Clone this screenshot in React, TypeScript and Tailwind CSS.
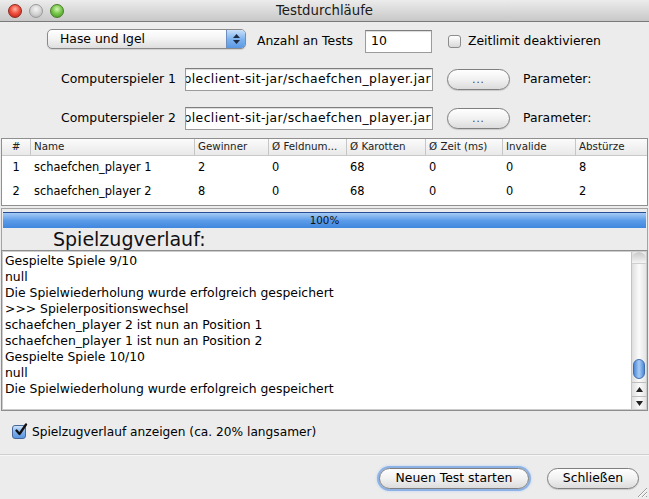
import React from "react";

function Light({ kind }: { kind: "red" | "gray" | "green" }) {
  const cls =
    kind === "red"
      ? "bg-[radial-gradient(circle_at_50%_35%,#ffb3a6_0%,#f0513f_45%,#b8160e_100%)] border-[#8e2a20]"
      : kind === "green"
      ? "bg-[radial-gradient(circle_at_50%_35%,#d6f5b8_0%,#79c94c_45%,#3b8f1d_100%)] border-[#4d7a2c]"
      : "bg-[radial-gradient(circle_at_50%_35%,#f4f4f4_0%,#d4d4d4_50%,#aaaaaa_100%)] border-[#9a9a9a]";
  return <div className={`w-[14px] h-[14px] rounded-full border ${cls}`} />;
}

function PathInput() {
  return (
    <div className="ml-[9px] w-[248px] h-[23px] bg-white border border-[#9b9b9b] border-t-[#7d7d7d] shadow-[inset_0_1px_1px_rgba(0,0,0,0.15)] overflow-hidden flex justify-end items-center pr-[1px] whitespace-nowrap">
      <span className="tracking-[0.4px]">simpleclient-sit-jar/schaefchen_player.jar</span>
    </div>
  );
}

function PillButton({ children, w, focus }: { children: React.ReactNode; w: string; focus?: boolean }) {
  return (
    <div
      className={`${w} h-[21px] rounded-full border border-[#7f7f7f] bg-gradient-to-b from-[#ffffff] via-[#f1f1f1] to-[#dcdcdc] flex items-center justify-center ${
        focus ? "shadow-[0_0_0_2px_#8db3e6,0_0_3px_2px_#b9d2f2]" : "shadow-[0_1px_1px_rgba(0,0,0,0.15)]"
      }`}
    >
      {children}
    </div>
  );
}

function Row({ label }: { label: string }) {
  return (
    <div className="flex items-center h-[23px]">
      <div className="w-[176px] text-right">{label}</div>
      <PathInput />
      <div className="ml-[14px]">
        <PillButton w="w-[63px]">
          <span className="text-[10px] tracking-[1px] text-[#333]">...</span>
        </PillButton>
      </div>
      <div className="ml-[13px]">Parameter:</div>
    </div>
  );
}

const header = ["#", "Name", "Gewinner", "Ø Feldnum...", "Ø Karotten", "Ø Zeit (ms)", "Invalide", "Abstürze"];
const rows = [
  ["1", "schaefchen_player 1", "2", "0", "68", "0", "0", "8"],
  ["2", "schaefchen_player 2", "8", "0", "68", "0", "0", "2"],
];

const logLines = [
  "Gespielte Spiele 9/10",
  "null",
  "Die Spielwiederholung wurde erfolgreich gespeichert",
  ">>> Spielerpositionswechsel",
  "schaefchen_player 2 ist nun an Position 1",
  "schaefchen_player 1 ist nun an Position 2",
  "Gespielte Spiele 10/10",
  "null",
  "Die Spielwiederholung wurde erfolgreich gespeichert",
];

export default function App() {
  return (
    <div className="relative w-[649px] h-[499px] overflow-hidden bg-[#ececec] font-['DejaVu_Sans',sans-serif] text-[12.4px] text-black flex flex-col">
      {/* Title bar */}
      <div className="relative h-[22px] shrink-0 border-b border-[#7a7a7a] bg-gradient-to-b from-[#ececec] to-[#c8c8c8] flex items-center">
        <div className="flex items-center gap-[7px] pl-[8px]">
          <Light kind="red" />
          <Light kind="gray" />
          <Light kind="green" />
        </div>
        <div className="absolute inset-0 flex items-center justify-center text-[13.3px] text-[#1a1a1a]">
          Testdurchläufe
        </div>
      </div>

      {/* Row 1 */}
      <div className="mt-[7px] h-[24px] flex items-center">
        <div className="self-start ml-[47px] w-[199px] h-[20px] rounded-[5px] border border-[#8a8a8a] bg-gradient-to-b from-[#ffffff] via-[#f3f3f3] to-[#dedede] flex overflow-hidden shadow-[0_1px_1px_rgba(0,0,0,0.12)]">
          <div className="flex-1 pl-[12px] flex items-center">Hase und Igel</div>
          <div className="w-[19px] h-full border-l border-[#6d8fbf] bg-gradient-to-b from-[#c9e0fa] via-[#7fb3ee] to-[#5a98e4] flex flex-col items-center justify-center gap-[2px]">
            <svg width="7" height="4" viewBox="0 0 7 4"><path d="M3.5 0 L7 4 L0 4 Z" fill="#1d2b44" /></svg>
            <svg width="7" height="4" viewBox="0 0 7 4"><path d="M0 0 L7 0 L3.5 4 Z" fill="#1d2b44" /></svg>
          </div>
        </div>
        <div className="ml-[11px] w-[108px]">Anzahl an Tests</div>
        <div className="self-start mt-[1px] w-[67px] h-[23px] bg-white border border-[#9b9b9b] border-t-[#7d7d7d] shadow-[inset_0_1px_1px_rgba(0,0,0,0.15)] flex items-center pl-[5px]">
          10
        </div>
        <div className="ml-[16px] w-[13px] h-[13px] rounded-[3px] border border-[#8c8c8c] bg-gradient-to-b from-[#ffffff] to-[#d9d9d9]" />
        <div className="ml-[7px]">Zeitlimit deaktivieren</div>
      </div>

      {/* Row 2 & 3 */}
      <div className="mt-[15px]">
        <Row label="Computerspieler 1" />
      </div>
      <div className="mt-[16px]">
        <Row label="Computerspieler 2" />
      </div>

      {/* Table */}
      <div className="mt-[8px] mx-[1px] border border-[#8f8f8f] bg-white">
        <div className="grid grid-cols-[28px_164px_74px_78px_79px_77px_73px_72px] h-[17px] border-b border-[#c9c9c9] bg-gradient-to-b from-[#fbfbfb] to-[#e9e9e9] text-[10.3px] text-[#222]">
          {header.map((h, i) => (
            <div
              key={i}
              className={`flex items-center whitespace-nowrap overflow-hidden ${
                i === 0 ? "justify-center" : "pl-[3px] border-l border-[#c6c6c6]"
              }`}
            >
              {h}
            </div>
          ))}
        </div>
        {rows.map((r, ri) => (
          <div key={ri} className="grid grid-cols-[28px_164px_74px_78px_79px_77px_73px_72px] h-[24px] text-[11.4px]">
            {r.map((c, i) => (
              <div key={i} className={`flex items-center whitespace-nowrap ${i === 0 ? "justify-center" : "pl-[4px]"}`}>
                {c}
              </div>
            ))}
          </div>
        ))}
        <div className="h-[1px]" />
      </div>

      {/* Progress panel */}
      <div className="mt-[2px] mx-[1px] h-[42px] border-t border-x border-[#a3a3a3] flex flex-col">
        <div className="mt-[3px] mx-[1px] h-[16px] border-t border-[#284f95] bg-gradient-to-b from-[#a6cbf4] via-[#5c9ce8] to-[#3f86de] flex items-center justify-center text-[10.3px] text-[#111]">
          100%
        </div>
        <div className="flex-1 flex items-center pl-[51px] text-[19px] leading-[22px] text-[#111]">
          Spielzugverlauf:
        </div>
      </div>

      {/* Text area */}
      <div className="mx-[1px] h-[161px] border border-[#8e8e8e]">
        <div className="h-full border border-[#cdcdcd] bg-white flex">
          <div className="flex-1 pl-[2px] pt-[1px] leading-[16px] whitespace-nowrap overflow-hidden">
            {logLines.map((l, i) => (
              <div key={i}>{l}</div>
            ))}
          </div>
          {/* Scrollbar */}
          <div className="w-[15px] h-full border-l border-[#c4c4c4] bg-gradient-to-r from-[#dedede] via-[#fbfbfb] to-[#e4e4e4] flex flex-col">
            <div className="h-[12px] rounded-t-full border-b border-[#cfcfcf] bg-gradient-to-b from-[#c8c8c8] to-[#f4f4f4]" />
            <div className="flex-1 relative">
              <div className="absolute left-[1px] right-[1px] bottom-[3px] h-[20px] rounded-full border border-[#3e6eb0] bg-gradient-to-r from-[#4d87d6] via-[#a8cdf6] to-[#4f8ad8]" />
            </div>
            <div className="h-[14px] border-t border-[#bdbdbd] flex items-center justify-center">
              <svg width="7" height="5" viewBox="0 0 7 5"><path d="M3.5 0 L7 5 L0 5 Z" fill="#222" /></svg>
            </div>
            <div className="h-[13px] border-t border-[#bdbdbd] flex items-center justify-center">
              <svg width="7" height="5" viewBox="0 0 7 5"><path d="M0 0 L7 0 L3.5 5 Z" fill="#222" /></svg>
            </div>
          </div>
        </div>
      </div>

      {/* Checkbox */}
      <div className="mt-[14px] h-[14px] flex items-center pl-[12px]">
        <div className="relative w-[14px] h-[14px] rounded-[3px] border border-[#46679a] bg-gradient-to-b from-[#cfe3fa] via-[#7fb1ec] to-[#5a95e0]">
          <svg className="absolute left-[1px] top-[-3px]" width="14" height="14" viewBox="0 0 14 14">
            <path d="M2.5 7.5 L5.5 11 L12 1.5" stroke="#111" strokeWidth="2.3" fill="none" strokeLinecap="round" strokeLinejoin="round" />
          </svg>
        </div>
        <div className="ml-[6px] text-[12.2px]">Spielzugverlauf anzeigen (ca. 20% langsamer)</div>
      </div>

      {/* Separator */}
      <div className="mt-[15px] h-[1px] bg-[#cfcfcf]" />
      <div className="h-[1px] bg-[#f7f7f7]" />

      {/* Buttons */}
      <div className="mt-[12px] flex justify-end pr-[10px] gap-[18px]">
        <PillButton w="w-[150px]" focus>
          Neuen Test starten
        </PillButton>
        <PillButton w="w-[92px]">Schließen</PillButton>
      </div>

      {/* Resize grip */}
      <svg className="absolute right-[1px] bottom-[1px]" width="12" height="12" viewBox="0 0 12 12">
        <path d="M11 2 L2 11 M11 6 L6 11 M11 10 L10 11" stroke="#9a9a9a" strokeWidth="1" />
        <path d="M11 3 L3 11 M11 7 L7 11" stroke="#ffffff" strokeWidth="1" />
      </svg>
    </div>
  );
}
